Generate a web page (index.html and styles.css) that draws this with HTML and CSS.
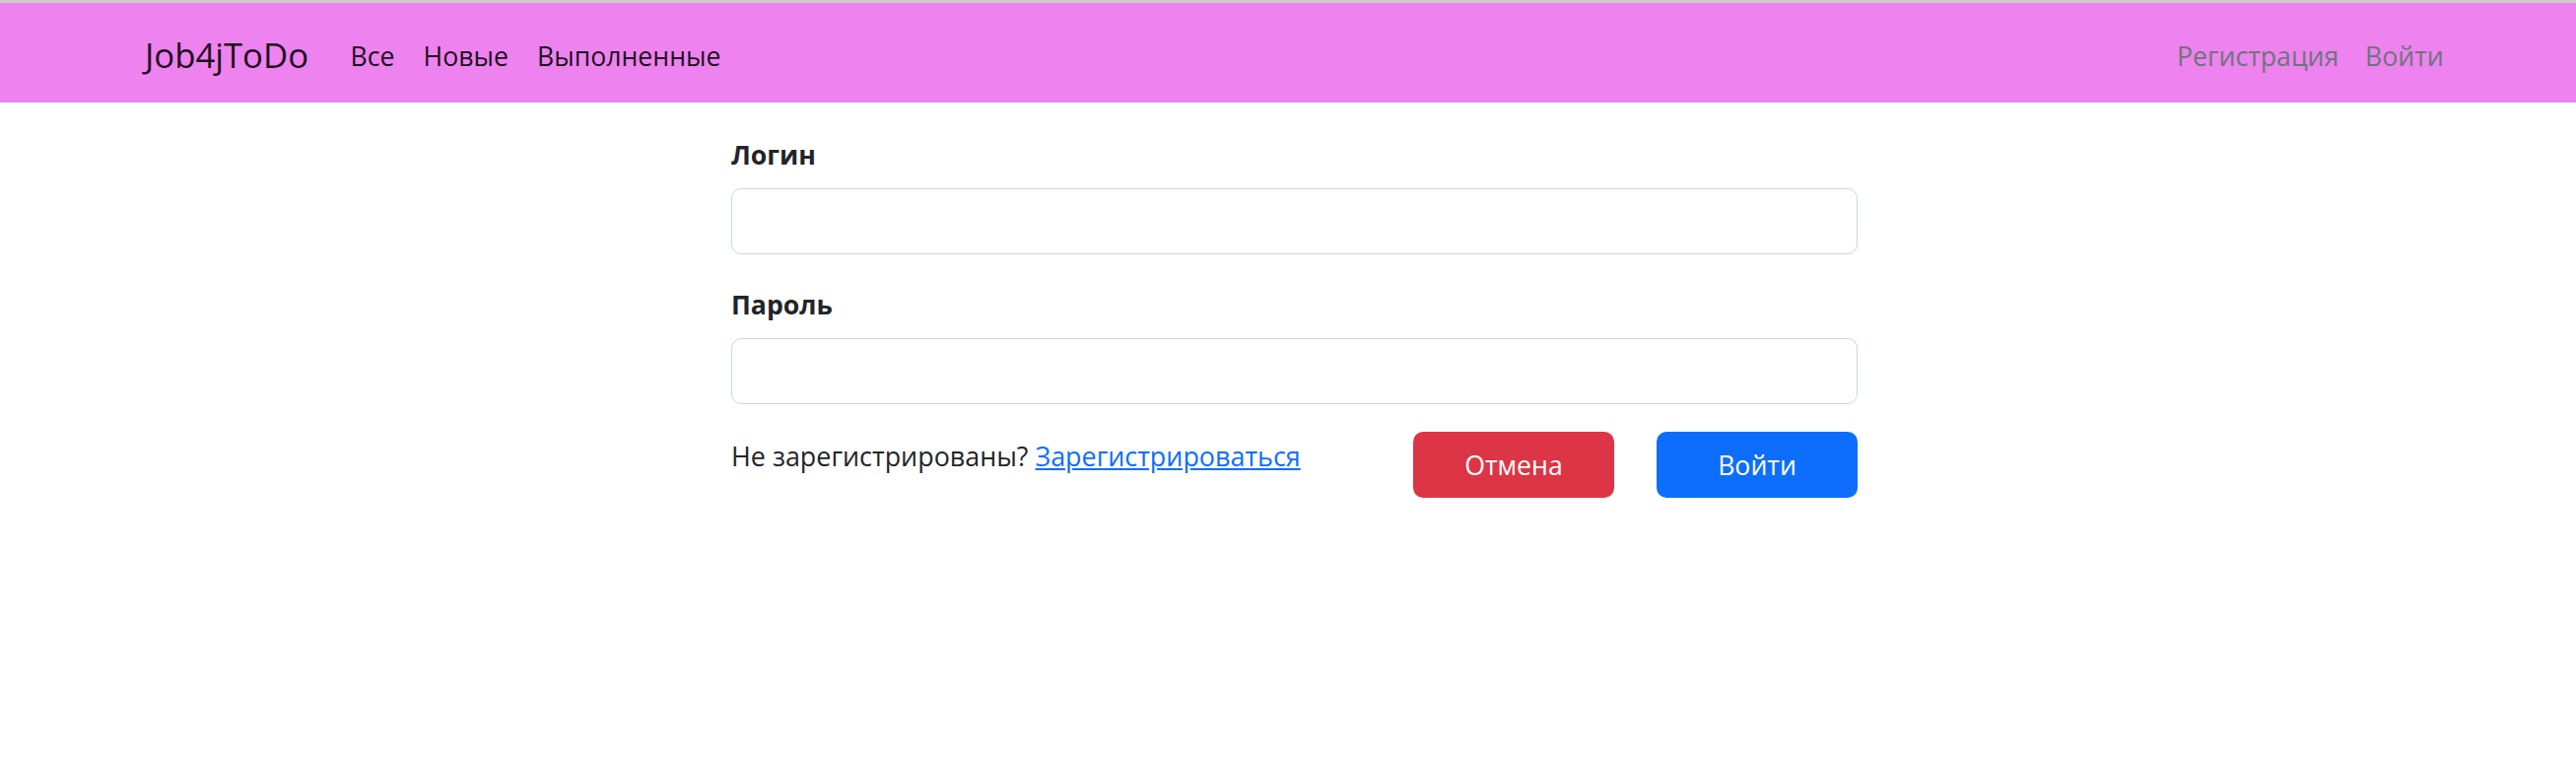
FILE: index.html
```html
<!DOCTYPE html>
<html lang="ru">
<head>
<meta charset="utf-8">
<title>Job4jToDo</title>
<link rel="stylesheet" href="styles.css">
</head>
<body>
<header class="site-header">
  <nav class="navbar">
    <a class="brand" href="#">Job4jToDo</a>
    <ul class="nav-list nav-main">
      <li><a class="nav-link" href="#">Все</a></li>
      <li><a class="nav-link" href="#">Новые</a></li>
      <li><a class="nav-link" href="#">Выполненные</a></li>
    </ul>
    <ul class="nav-list nav-auth">
      <li><a class="nav-link" href="#">Регистрация</a></li>
      <li><a class="nav-link" href="#">Войти</a></li>
    </ul>
  </nav>
</header>
<main class="page">
  <form class="login-form">
    <div class="field">
      <label class="field-label" for="login">Логин</label>
      <input class="field-input" id="login" type="text">
    </div>
    <div class="field field-last">
      <label class="field-label" for="password">Пароль</label>
      <input class="field-input" id="password" type="password">
    </div>
    <div class="actions">
      <p class="hint">Не зарегистрированы? <a class="hint-link" href="#">Зарегистрироваться</a></p>
      <div class="buttons">
        <button class="btn btn-cancel" type="button">Отмена</button>
        <button class="btn btn-submit" type="submit">Войти</button>
      </div>
    </div>
  </form>
</main>
</body>
</html>
```

FILE: styles.css
```css
* {
  box-sizing: border-box;
}

html, body {
  margin: 0;
  padding: 0;
  background: #ffffff;
}

body {
  font-family: "Open Sans", "Noto Sans", sans-serif;
  font-size: 26.67px;
  line-height: 1.5;
  color: #212529;
}

.site-header {
  border-top: 3px solid #cccccc;
}

.navbar {
  display: flex;
  align-items: center;
  height: 101px;
  padding: 6px 121px 0 147px;
  background: #ee82ee;
}

.brand {
  font-size: 34.7px;
  line-height: 1.5;
  color: rgba(0, 0, 0, 0.9);
  text-decoration: none;
  margin-right: 28px;
}

.nav-list {
  display: flex;
  list-style: none;
  margin: 0;
  padding: 0;
}

.nav-auth {
  margin-left: auto;
}

.nav-link {
  display: block;
  padding: 0 14px;
  text-decoration: none;
  color: rgba(0, 0, 0, 0.9);
}

.nav-main .nav-link {
  padding: 0 14.5px;
}

.nav-auth .nav-link {
  padding: 0 13.33px;
  color: #6c757d;
}

.page {
  width: 1143px;
  margin-left: 742px;
  padding-top: 33px;
}

.field {
  display: flex;
  flex-direction: column;
  margin-bottom: 31px;
}

.field-last {
  margin-bottom: 28px;
}

.field-label {
  font-weight: 700;
  line-height: 40px;
  margin-bottom: 14px;
}

.field-input {
  display: block;
  width: 100%;
  height: 67px;
  border: 1.6px solid #ced4da;
  border-radius: 10px;
  background: #ffffff;
  font: inherit;
  padding: 10px 20px;
}

.actions {
  display: flex;
  align-items: flex-start;
  justify-content: space-between;
}

.hint {
  margin: 5px 0 0;
  line-height: 40px;
  font-size: 26.9px;
}

.hint-link {
  color: #0d6efd;
  text-decoration: underline;
}

.buttons {
  display: flex;
  gap: 43px;
}

.btn {
  width: 204px;
  height: 67px;
  border: none;
  border-radius: 10px;
  font: inherit;
  color: #ffffff;
  cursor: pointer;
}

.btn-cancel {
  background: #dc3545;
}

.btn-submit {
  background: #0d6efd;
}
```
